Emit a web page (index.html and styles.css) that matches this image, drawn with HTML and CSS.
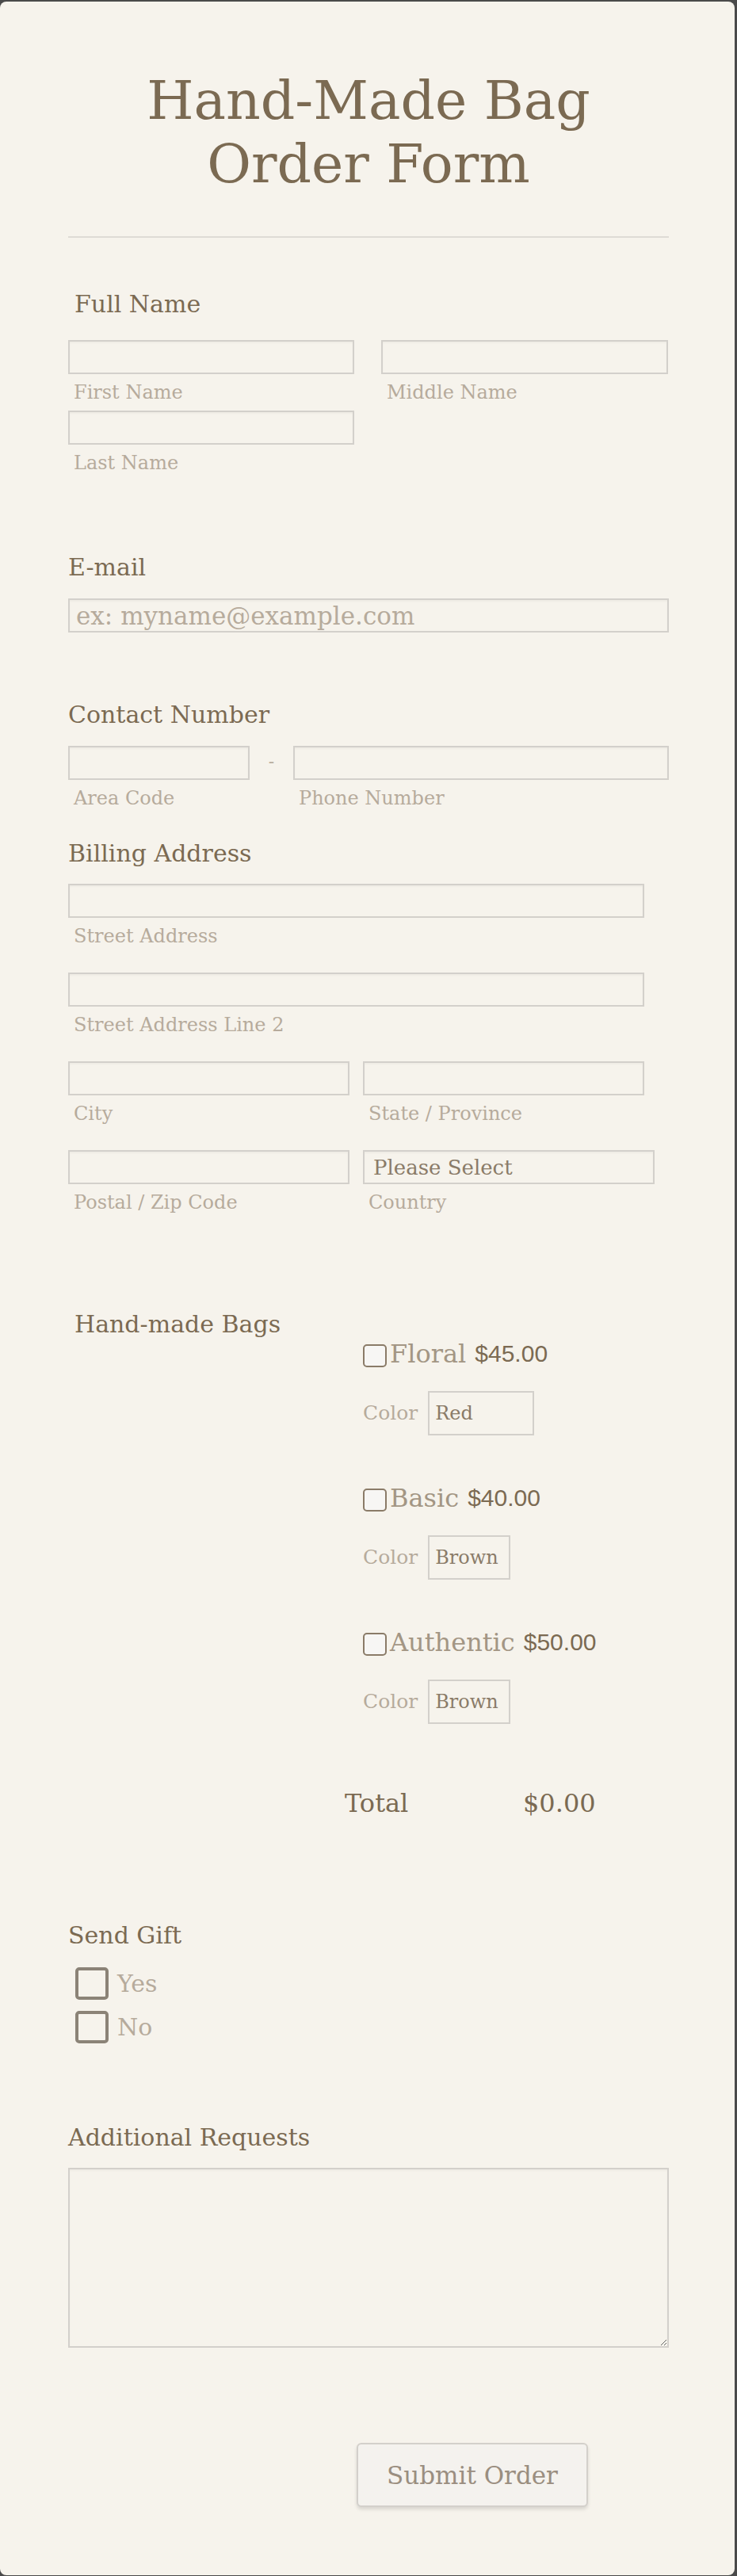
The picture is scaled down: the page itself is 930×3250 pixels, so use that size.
FILE: index.html
```html
<!DOCTYPE html>
<html lang="en">
<head>
  <meta charset="UTF-8">
  <title>Hand-Made Bag Order Form</title>
  <link rel="stylesheet" href="styles.css">
</head>
<body>
  <form class="order">
    <h1 class="title">Hand-Made Bag Order Form</h1>
    <hr class="divider">

    <div class="head indent head-name">Full Name</div>
    <div class="name-grid">
      <div class="field">
        <input type="text" class="box">
        <span class="sub">First Name</span>
      </div>
      <div class="field">
        <input type="text" class="box">
        <span class="sub">Middle Name</span>
      </div>
      <div class="field">
        <input type="text" class="box">
        <span class="sub">Last Name</span>
      </div>
    </div>

    <div class="head head-email">E-mail</div>
    <input type="text" class="box email" placeholder="ex: myname@example.com">

    <div class="head head-contact">Contact Number</div>
    <div class="phone">
      <div class="field area">
        <input type="text" class="box">
        <span class="sub">Area Code</span>
      </div>
      <span class="dash">-</span>
      <div class="field number">
        <input type="text" class="box">
        <span class="sub">Phone Number</span>
      </div>
    </div>

    <div class="head head-billing">Billing Address</div>
    <div class="address">
      <div class="field wide">
        <input type="text" class="box">
        <span class="sub">Street Address</span>
      </div>
      <div class="field wide">
        <input type="text" class="box">
        <span class="sub">Street Address Line 2</span>
      </div>
      <div class="field">
        <input type="text" class="box">
        <span class="sub">City</span>
      </div>
      <div class="field">
        <input type="text" class="box">
        <span class="sub">State / Province</span>
      </div>
      <div class="field">
        <input type="text" class="box">
        <span class="sub">Postal / Zip Code</span>
      </div>
      <div class="field">
        <select class="box country">
          <option>Please Select</option>
        </select>
        <span class="sub">Country</span>
      </div>
    </div>

    <div class="head indent head-bags">Hand-made Bags</div>
    <div class="products">
      <div class="item">
        <label class="pick"><input type="checkbox" class="check"><span class="bag">Floral</span><span class="price">$45.00</span></label>
        <div class="color-row"><span class="color-label">Color</span><span class="color-box red">Red</span></div>
      </div>
      <div class="item">
        <label class="pick"><input type="checkbox" class="check"><span class="bag">Basic</span><span class="price">$40.00</span></label>
        <div class="color-row"><span class="color-label">Color</span><span class="color-box">Brown</span></div>
      </div>
      <div class="item">
        <label class="pick"><input type="checkbox" class="check"><span class="bag">Authentic</span><span class="price">$50.00</span></label>
        <div class="color-row"><span class="color-label">Color</span><span class="color-box">Brown</span></div>
      </div>
    </div>
    <div class="total">
      <span class="total-label">Total</span>
      <span class="total-value">$0.00</span>
    </div>

    <div class="head head-gift">Send Gift</div>
    <div class="gift">
      <label class="gift-row"><input type="checkbox" class="gift-check"><span>Yes</span></label>
      <label class="gift-row"><input type="checkbox" class="gift-check"><span>No</span></label>
    </div>

    <div class="head head-requests">Additional Requests</div>
    <textarea class="box requests"></textarea>

    <button type="button" class="submit">Submit Order</button>
  </form>
</body>
</html>
```

FILE: styles.css
```css
body {
  margin: 0;
  background-color: #4a4a4a;
  font-family: "DejaVu Serif", serif;
}
.order {
  display: block;
  margin: 2px 3px 3px 0;
  padding: 85px 83px 86px 86px;
  background: #f6f3ec;
  border-radius: 8px;
}
.title {
  margin: 0;
  font-size: 68px;
  line-height: 80px;
  font-weight: normal;
  color: #7b6a52;
  text-align: center;
}
.divider {
  margin: 51px 0 0;
  border: none;
  height: 2px;
  background: #dedbd5;
}
.head {
  font-size: 30px;
  line-height: 36px;
  color: #7b6a52;
}
.indent {
  padding-left: 8px;
}
.head-name { margin-top: 66px; }
.head-email { margin-top: 101px; }
.head-contact { margin-top: 86px; }
.head-billing { margin-top: 39px; }
.head-bags { margin-top: 123px; }
.head-gift { margin-top: 130px; }
.head-requests { margin-top: 101px; }

.box {
  display: block;
  box-sizing: border-box;
  width: 100%;
  height: 43px;
  margin: 0;
  border: 2px solid #d3d0cb;
  background: #f6f3ec;
  box-shadow: inset 0 2px 2px rgba(0, 0, 0, 0.03);
  font-family: "DejaVu Serif", serif;
  outline: none;
}
.sub {
  display: block;
  margin-top: 10px;
  padding-left: 7px;
  font-size: 24px;
  line-height: 26px;
  color: #b6ab9c;
}
.name-grid {
  display: grid;
  grid-template-columns: 361px 362px;
  column-gap: 34px;
  row-gap: 10px;
  margin-top: 27px;
}
.email {
  margin-top: 21px;
  padding: 0 8px;
  font-size: 31px;
}
.email::placeholder {
  color: #b6ab9c;
}
.phone {
  display: flex;
  margin-top: 21px;
}
.area {
  width: 229px;
}
.dash {
  width: 55px;
  text-align: center;
  font-size: 22px;
  line-height: 40px;
  color: #b6ab9c;
}
.number {
  flex: 1;
}
.address {
  display: grid;
  grid-template-columns: 355px 355px;
  column-gap: 17px;
  row-gap: 33px;
  margin-top: 20px;
  padding-right: 30px;
}
.address .wide {
  grid-column: 1 / 3;
}
.country {
  width: 368px;
  appearance: none;
  -webkit-appearance: none;
  padding-left: 11px;
  font-size: 26px;
  color: #8a7b68;
}

.products {
  margin: 4px 0 0 372px;
}
.item {
  margin-bottom: 64px;
}
.item:last-child {
  margin-bottom: 0;
}
.pick {
  display: flex;
  align-items: flex-start;
  height: 30px;
  line-height: 30px;
}
.check {
  appearance: none;
  -webkit-appearance: none;
  box-sizing: border-box;
  width: 30px;
  height: 29px;
  margin: 3px 4px 0 0;
  border: 2px solid #8a7b68;
  border-radius: 5px;
  background: #f7f6f4;
}
.bag {
  font-size: 32px;
  color: #a39684;
}
.price {
  margin-left: 11px;
  font-family: "Liberation Sans", sans-serif;
  font-size: 30px;
  color: #7b6a52;
}
.color-row {
  display: flex;
  align-items: center;
  margin-top: 32px;
}
.color-label {
  font-size: 25px;
  line-height: 28px;
  color: #b6ab9c;
}
.color-box {
  box-sizing: border-box;
  width: 104px;
  height: 56px;
  margin-left: 13px;
  padding-left: 7px;
  border: 2px solid #d3d0cb;
  font-size: 24px;
  line-height: 52px;
  color: #8a7b68;
}
.color-box.red {
  width: 134px;
}
.total {
  display: flex;
  margin: 81px 0 0 349px;
  font-size: 32px;
  line-height: 38px;
  color: #7b6a52;
}
.total-label {
  width: 225px;
}

.gift {
  display: flex;
  flex-direction: column;
  gap: 14px;
  margin-top: 22px;
  padding-left: 9px;
}
.gift-row {
  display: flex;
  align-items: center;
  height: 41px;
  font-size: 30px;
  line-height: 41px;
  color: #b6ab9c;
}
.gift-check {
  appearance: none;
  -webkit-appearance: none;
  box-sizing: border-box;
  width: 42px;
  height: 41px;
  margin: 0 11px 0 0;
  border: 4px solid #8b8377;
  border-radius: 5px;
  background: #f6f3ec;
}
.requests {
  height: 227px;
  margin-top: 20px;
  resize: vertical;
}
.submit {
  display: block;
  box-sizing: border-box;
  width: 292px;
  height: 81px;
  margin: 120px 0 0 364px;
  border: 2px solid #d3d0cb;
  border-radius: 6px;
  background: #f4f2ee;
  box-shadow: 0 3px 4px rgba(0, 0, 0, 0.12);
  font-family: "DejaVu Serif", serif;
  font-size: 31px;
  color: #9a8e80;
  cursor: pointer;
}
```
